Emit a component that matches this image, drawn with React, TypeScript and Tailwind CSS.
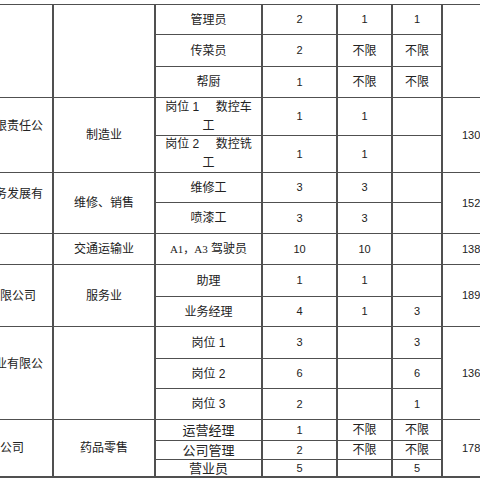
import type { ReactNode } from 'react'

type CellProps = {
  children?: ReactNode
  span?: string
  className?: string
}

function Cell({ children, span = '', className = '' }: CellProps) {
  return (
    <div className={`bg-white flex items-center justify-center text-center overflow-hidden ${span} ${className}`}>
      {children}
    </div>
  )
}

function Num({ children }: { children?: ReactNode }) {
  return <Cell className="text-[11px]">{children}</Cell>
}

// company column: only the right end of the name shows, second line is off to the left
function Company({ span, line, two, pr }: { span: string; line?: string; two?: boolean; pr: string }) {
  return (
    <div className={`bg-white flex flex-col items-end justify-center whitespace-nowrap overflow-hidden leading-[18px] ${span} ${pr}`}>
      {line && <span>{line}</span>}
      {two && <span>&nbsp;</span>}
    </div>
  )
}

function Phone({ span, children }: { span: string; children?: ReactNode }) {
  return (
    <div className={`bg-white flex items-center pl-[19px] whitespace-nowrap overflow-hidden text-[11px] ${span}`}>
      {children}
    </div>
  )
}

export default function App() {
  return (
    <div className="w-[480px] h-[480px] overflow-hidden bg-white pt-[4px] text-[#222] font-['Liberation_Sans','Noto_Sans_CJK_SC',sans-serif] text-[12px]">
      <div className="ml-[-68px] w-max grid grid-cols-[120px_100px_105px_73px_53px_48px_100px] grid-rows-[29px_31px_30px_37px_36px_29px_30px_30px_31px_29px_31px_29px_30px_20px_18px_16px] gap-x-[2px] gap-y-px pt-px pb-[2px] bg-[#505050]">
        {/* 餐饮 */}
        <Company span="row-span-3" pr="pr-[9px]" />
        <Cell span="row-span-3" />
        <Cell>管理员</Cell>
        <Num>2</Num>
        <Num>1</Num>
        <Num>1</Num>
        <Phone span="row-span-3" />
        <Cell>传菜员</Cell>
        <Num>2</Num>
        <Cell>不限</Cell>
        <Cell>不限</Cell>
        <Cell>帮厨</Cell>
        <Num>1</Num>
        <Cell>不限</Cell>
        <Cell>不限</Cell>

        {/* 制造业 */}
        <Company span="row-span-2" line="限责任公" two pr="pr-[9px]" />
        <Cell span="row-span-2">制造业</Cell>
        <Cell className="leading-[19px]">
          <span>
            岗位 1&nbsp;&nbsp;&nbsp;&nbsp;&nbsp;数控车
            <br />工
          </span>
        </Cell>
        <Num>1</Num>
        <Num>1</Num>
        <Cell />
        <Phone span="row-span-2">130</Phone>
        <Cell className="leading-[19px]">
          <span>
            岗位 2&nbsp;&nbsp;&nbsp;&nbsp;&nbsp;数控铣
            <br />工
          </span>
        </Cell>
        <Num>1</Num>
        <Num>1</Num>
        <Cell />

        {/* 维修、销售 */}
        <Company span="row-span-2" line="务发展有" two pr="pr-[9px]" />
        <Cell span="row-span-2">维修、销售</Cell>
        <Cell>维修工</Cell>
        <Num>3</Num>
        <Num>3</Num>
        <Cell />
        <Phone span="row-span-2">152</Phone>
        <Cell>喷漆工</Cell>
        <Num>3</Num>
        <Num>3</Num>
        <Cell />

        {/* 交通运输业 */}
        <Company span="" pr="pr-[9px]" />
        <Cell>交通运输业</Cell>
        <Cell>
          <span className="font-['Liberation_Serif','Noto_Sans_CJK_SC',serif] text-[11px]">A1，A3</span>
          <span>&nbsp;驾驶员</span>
        </Cell>
        <Num>10</Num>
        <Num>10</Num>
        <Cell />
        <Phone span="">138</Phone>

        {/* 服务业 */}
        <Company span="row-span-2" line="限公司" pr="pr-[16px]" />
        <Cell span="row-span-2">服务业</Cell>
        <Cell>助理</Cell>
        <Num>1</Num>
        <Num>1</Num>
        <Cell />
        <Phone span="row-span-2">189</Phone>
        <Cell>业务经理</Cell>
        <Num>4</Num>
        <Num>1</Num>
        <Num>3</Num>

        {/* 岗位 1-3 */}
        <Company span="row-span-3" line="业有限公" two pr="pr-[9px]" />
        <Cell span="row-span-3" />
        <Cell>岗位 1</Cell>
        <Num>3</Num>
        <Cell />
        <Num>3</Num>
        <Phone span="row-span-3">136</Phone>
        <Cell>岗位 2</Cell>
        <Num>6</Num>
        <Cell />
        <Num>6</Num>
        <Cell>岗位 3</Cell>
        <Num>2</Num>
        <Cell />
        <Num>1</Num>

        {/* 药品零售 */}
        <Company span="row-span-3" line="公司" pr="pr-[28px]" />
        <Cell span="row-span-3">药品零售</Cell>
        <Cell className="text-[13px] leading-none">运营经理</Cell>
        <Num>1</Num>
        <Cell className="leading-none">不限</Cell>
        <Cell className="leading-none">不限</Cell>
        <Phone span="row-span-3">178</Phone>
        <Cell className="text-[13px] leading-none">公司管理</Cell>
        <Num>2</Num>
        <Cell className="leading-none">不限</Cell>
        <Cell className="leading-none">不限</Cell>
        <Cell className="text-[13px] leading-none">营业员</Cell>
        <Num>5</Num>
        <Cell />
        <Num>5</Num>
      </div>
    </div>
  )
}
